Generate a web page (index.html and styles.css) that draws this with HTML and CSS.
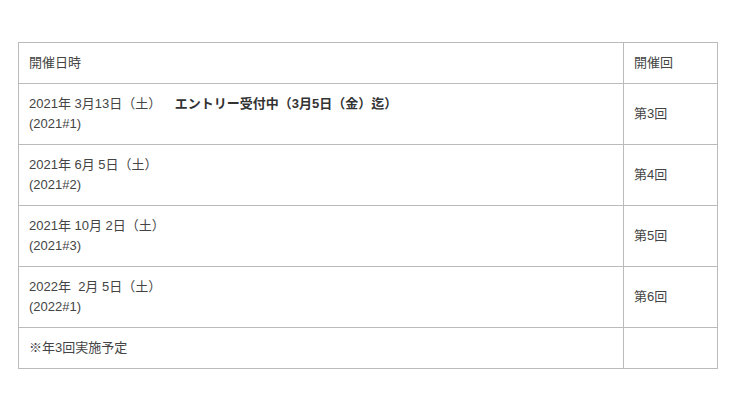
FILE: index.html
```html
<!DOCTYPE html>
<html lang="ja">
<head>
<meta charset="utf-8">
<link rel="stylesheet" href="styles.css">
</head>
<body>
<div class="wrap">
<table class="schedule">
  <tr>
    <td class="date">開催日時</td>
    <td class="round">開催回</td>
  </tr>
  <tr>
    <td class="date">2021年 3月13日（土）　<strong class="entry">エントリー受付中（3月5日（金）迄）</strong><br>(2021#1)</td>
    <td class="round">第3回</td>
  </tr>
  <tr>
    <td class="date">2021年 6月 5日（土）<br>(2021#2)</td>
    <td class="round">第4回</td>
  </tr>
  <tr>
    <td class="date">2021年 10月 2日（土）<br>(2021#3)</td>
    <td class="round">第5回</td>
  </tr>
  <tr>
    <td class="date">2022年&nbsp; 2月 5日（土）<br>(2022#1)</td>
    <td class="round">第6回</td>
  </tr>
  <tr>
    <td class="date">※年3回実施予定</td>
    <td class="round"></td>
  </tr>
</table>
</div>
</body>
</html>
```
FILE: styles.css
```css
html, body {
  margin: 0;
  padding: 0;
  background: #fff;
}
body {
  font-family: "Liberation Sans", "Noto Sans CJK JP", sans-serif;
  font-size: 13px;
  color: #444;
}
.wrap {
  padding: 42px 22px 0 18px;
}
.schedule {
  width: 700px;
  border-collapse: collapse;
}
.schedule td {
  border: 1px solid #bbb;
  padding: 10px 10px;
  line-height: 20px;
  vertical-align: middle;
  text-align: left;
}
.schedule .round {
  width: 73px;
}
.entry {
  font-weight: bold;
  color: #333;
  margin-left: 7px;
}
```
